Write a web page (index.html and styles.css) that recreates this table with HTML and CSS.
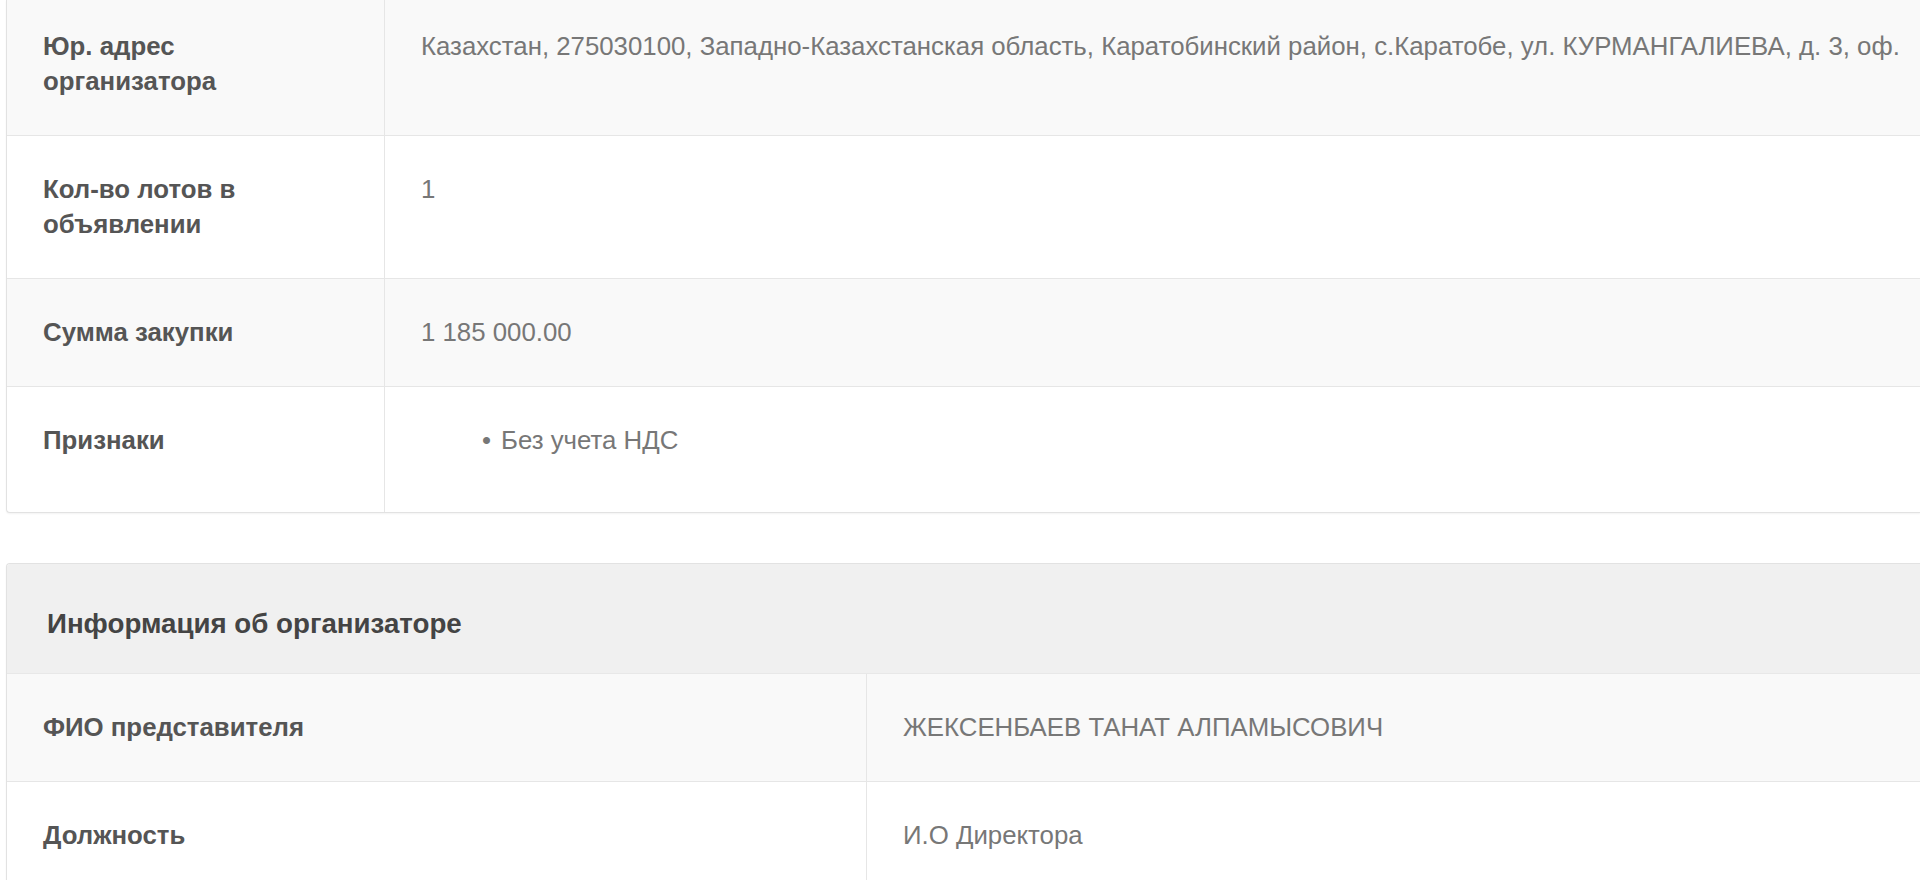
FILE: index.html
```html
<!DOCTYPE html>
<html lang="ru">
<head>
<meta charset="utf-8">
<title>Объявление</title>
<link rel="stylesheet" href="styles.css">
</head>
<body>
<div class="page">
  <section class="card card-main">
    <table class="info-table">
      <tr class="row-striped row-first">
        <th class="label label-narrow">Юр. адрес<br>организатора</th>
        <td class="value">Казахстан, 275030100, Западно-Казахстанская область, Каратобинский район, с.Каратобе, ул. КУРМАНГАЛИЕВА, д. 3, оф.</td>
      </tr>
      <tr>
        <th class="label label-narrow">Кол-во лотов в<br>объявлении</th>
        <td class="value">1</td>
      </tr>
      <tr class="row-striped">
        <th class="label label-narrow">Сумма закупки</th>
        <td class="value">1 185 000.00</td>
      </tr>
      <tr>
        <th class="label label-narrow">Признаки</th>
        <td class="value">
          <ul class="flags">
            <li>Без учета НДС</li>
          </ul>
        </td>
      </tr>
    </table>
  </section>

  <section class="card card-org">
    <div class="card-header">Информация об организаторе</div>
    <table class="info-table">
      <tr class="row-striped">
        <th class="label label-wide">ФИО представителя</th>
        <td class="value">ЖЕКСЕНБАЕВ ТАНАТ АЛПАМЫСОВИЧ</td>
      </tr>
      <tr>
        <th class="label label-wide">Должность</th>
        <td class="value">И.О Директора</td>
      </tr>
    </table>
  </section>
</div>
</body>
</html>
```

FILE: styles.css
```css
html, body {
  margin: 0;
  padding: 0;
  background: #ffffff;
  overflow: hidden;
}

body {
  font-family: "Liberation Sans", Arial, Helvetica, sans-serif;
  font-size: 25.8px;
  line-height: 35px;
  color: #777777;
}

.page {
  box-sizing: border-box;
  width: 1920px;
  padding-left: 6px;
  display: flex;
  flex-direction: column;
  gap: 50px;
}

.card {
  border: 1px solid #e2e2e2;
  border-right: none;
  border-radius: 4px 0 0 4px;
  background: #ffffff;
  box-shadow: 0 1px 2px rgba(0, 0, 0, 0.05);
  overflow: hidden;
}

.card-main {
  border-top: none;
  border-top-left-radius: 0;
}

.info-table {
  width: 100%;
  border-collapse: collapse;
  table-layout: fixed;
}

.info-table tr + tr {
  border-top: 1px solid #e6e6e6;
}

.row-striped {
  background: #f9f9f9;
}

.label {
  text-align: left;
  vertical-align: top;
  font-weight: bold;
  color: #555555;
  padding: 36px 36px;
  white-space: nowrap;
}

.label-narrow {
  width: 305px;
}

.label-wide {
  width: 787px;
}

.value {
  vertical-align: top;
  padding: 36px 36px;
  border-left: 1px solid #e6e6e6;
  color: #777777;
  white-space: nowrap;
}

.row-first .label,
.row-first .value {
  padding-top: 29px;
}

.flags {
  margin: 0 0 18px 0;
  padding-left: 80px;
  list-style: none;
}

.flags li::before {
  content: "•";
  display: inline-block;
  width: 19px;
  margin-left: -19px;
}

.card-header {
  background: #f0f0f0;
  padding: 42px 40px 32px;
  font-size: 27.7px;
  font-weight: bold;
  color: #444444;
  border-bottom: 1px solid #e8e8e8;
}
```
